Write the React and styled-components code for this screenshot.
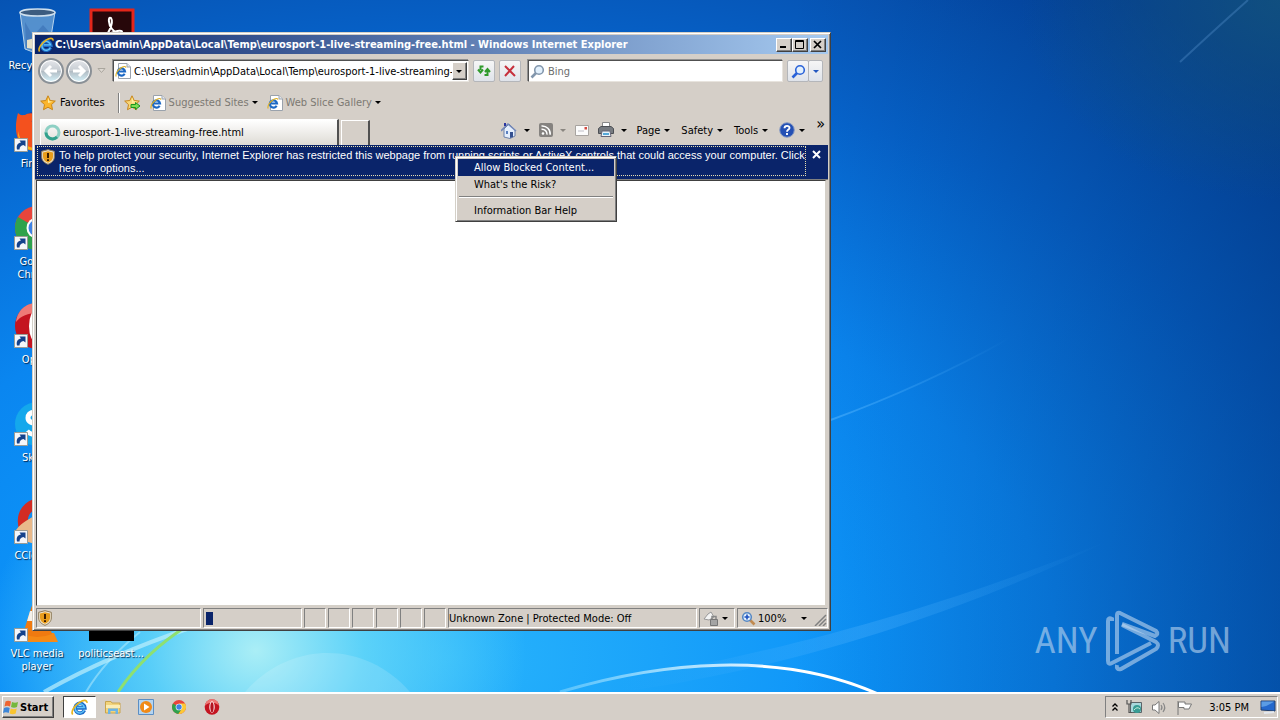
import React from "react";
import styled, { createGlobalStyle, css } from "styled-components";

const GlobalStyle = createGlobalStyle`
  * {
    box-sizing: border-box;
  }
  body {
    margin: 0;
    font-family: "DejaVu Sans Condensed", "DejaVu Sans", sans-serif;
    font-size: 11px;
    line-height: 13px;
    color: #000;
  }
  button, input {
    font: inherit;
    color: inherit;
    margin: 0;
    padding: 0;
    border: 0;
    background: none;
  }
  svg {
    display: block;
    flex: none;
  }
`;

const raised = css`
  border: 1px solid;
  border-color: #fff #404040 #404040 #fff;
  box-shadow: inset -1px -1px 0 #808080;
`;

const sunken = css`
  border: 1px solid;
  border-color: #808080 #fff #fff #808080;
`;

const Screen = styled.div`
  display: flex;
  flex-direction: column;
  min-height: 100vh;
`;

const Desktop = styled.main`
  position: relative;
  flex: 1;
  overflow: hidden;
  background:
    radial-gradient(ellipse 270px 240px at 20% 94%, #aaeef6 0, rgba(110, 222, 248, 0.75) 40%, rgba(40, 184, 252, 0) 100%),
    radial-gradient(ellipse 260px 200px at 100% 0, rgba(20, 84, 124, 0.8) 0, rgba(20, 84, 124, 0) 100%),
    linear-gradient(to right, rgba(0, 40, 110, 0) 62%, rgba(0, 40, 104, 0.4) 100%),
    radial-gradient(ellipse 95% 115% at 35% 95%, #28b4fc 0, #0c92f8 35%, #0a86f0 50%, #0664cc 75%, #0654b4 90%, #0446a4 100%);
`;

const Wallpaper = styled.svg`
  position: absolute;
  inset: 0;
  width: 100%;
  height: 100%;
`;

const IconGrid = styled.div`
  position: relative;
  display: grid;
  grid-template-columns: 74px 74px;
  grid-auto-rows: 88px;
  row-gap: 10px;
  padding-top: 8px;
`;

const Shortcut = styled.button`
  grid-row: ${(props) => props.$row};
  grid-column: ${(props) => props.$col};
  display: flex;
  flex-direction: column;
  align-items: center;
  gap: 3px;
  color: #fff;
  text-shadow: 1px 1px 1px #024;
`;

const ShortcutLabel = styled.span`
  width: 68px;
`;

const Watermark = styled.div`
  position: absolute;
  right: 49px;
  bottom: 20px;
  display: flex;
  align-items: center;
  gap: 7px;
  color: rgba(190, 215, 240, 0.6);
  font-family: "Roboto Condensed", "Liberation Sans Narrow", Roboto, sans-serif;
  font-size: 37px;
  font-weight: 400;
  line-height: 60px;
`;

const Window = styled.section`
  position: absolute;
  left: 32px;
  top: 32px;
  width: min(799px, calc(100% - 40px));
  height: min(599px, calc(100% - 40px));
  display: flex;
  flex-direction: column;
  padding: 2px;
  border: 1px solid;
  border-color: #d4d0c8 #404040 #404040 #d4d0c8;
  box-shadow: inset 1px 1px 0 #fff, inset -1px -1px 0 #808080;
  background: #d5cfc8;
`;

const TitleBar = styled.header`
  display: flex;
  align-items: center;
  gap: 1px;
  height: 19px;
  padding: 0 2px 0 3px;
  background: linear-gradient(to right, #0a246a, #a6caf0);
`;

const Title = styled.h1`
  flex: 1;
  margin: 0;
  font-size: 11px;
  font-weight: 700;
  color: #fff;
  white-space: nowrap;
  overflow: hidden;
`;

const CaptionButton = styled.button`
  ${raised}
  display: grid;
  place-items: center;
  width: 16px;
  height: 14px;
  background: #d5cfc8;
  margin-left: ${(props) => (props.$apart ? "1px" : "-1px")};
`;

const NavRow = styled.div`
  display: flex;
  align-items: center;
  height: 34px;
  padding: 0 5px 0 3px;
`;

const Travel = styled.div`
  display: flex;
  align-items: center;
  gap: 2px;
  margin-right: 5px;
`;

const RoundButton = styled.button`
  display: grid;
  place-items: center;
  width: 26px;
  height: 26px;
  border: 2px solid #8a9096;
  border-radius: 50%;
  box-shadow: inset 0 0 0 1px #fff;
  background: linear-gradient(#e4e6ea 0, #c6ccd2 48%, #b0bac2 50%, #d6f2fa 100%);
`;

const Field = styled.div`
  display: flex;
  align-items: center;
  flex: ${(props) => props.$grow};
  min-width: 0;
  height: 22px;
  padding: 0 1px;
  background: #fff;
  border: 1px solid;
  border-color: #505050 #e8e4de #e8e4de #505050;
  box-shadow: -1px -1px 0 #909090;
`;

const TextInput = styled.input`
  flex: 1;
  min-width: 0;
  padding-left: 3px;
  outline: none;
  &::placeholder {
    color: #6d6d6d;
    opacity: 1;
  }
`;

const DropButton = styled.button`
  ${raised}
  display: grid;
  place-items: center;
  width: 15px;
  height: 18px;
  background: #d5cfc8;
`;

const SoftButton = styled.button`
  display: grid;
  place-items: center;
  width: ${(props) => (props.$narrow ? "15px" : "22px")};
  height: 22px;
  border: 1px solid #b4b6ba;
  border-radius: 2px;
  background: linear-gradient(#f6f6f6, #dfe3ea);
  margin-left: ${(props) => (props.$narrow ? "-1px" : "4px")};
`;

const Caret = styled.span`
  flex: none;
  width: 0;
  height: 0;
  border: 3px solid transparent;
  border-bottom-width: 0;
  border-top-color: ${(props) => props.$color || "#000"};
`;

const FavoritesRow = styled.nav`
  display: flex;
  align-items: center;
  height: 29px;
  padding-left: 5px;
`;

const FavButton = styled.button`
  display: flex;
  align-items: center;
  gap: 3px;
  margin-right: 9px;
  color: ${(props) => (props.$dim ? "#7c7973" : "#000")};
`;

const Divider = styled.span`
  width: 2px;
  height: 20px;
  margin: 0 4px;
  border-left: 1px solid #808080;
  border-right: 1px solid #fff;
`;

const TabRow = styled.div`
  display: flex;
  align-items: stretch;
  height: 28px;
  padding: 2px 3px 0 5px;
`;

const Tab = styled.button`
  display: flex;
  align-items: center;
  gap: 2px;
  flex: 0 1 299px;
  padding-left: 3px;
  border-top: 1px solid #fff;
  border-left: 1px solid #fff;
  border-right: 2px solid #505050;
  background: linear-gradient(#fff, #dedbd5);
`;

const NewTab = styled.button`
  width: 29px;
  margin: 1px 0 0 2px;
  border: 1px solid #fff;
  border-right: 2px solid #505050;
  border-bottom: 0;
`;

const Commands = styled.div`
  display: flex;
  align-items: center;
  justify-content: flex-end;
  flex: 1;
  padding-bottom: 4px;
`;

const Command = styled.button`
  display: flex;
  align-items: center;
  gap: ${(props) => (props.$icon ? "7px" : "4px")};
  margin-right: ${(props) => (props.$icon ? "9px" : "11px")};
`;

const Overflow = styled.button`
  align-self: flex-start;
  font-size: 16px;
  line-height: 9px;
`;

const InfoBar = styled.div`
  display: flex;
  align-items: flex-start;
  justify-content: space-between;
  height: 35px;
  padding: 1px 5px 3px 2px;
  border-bottom: 1px solid #808080;
  background: #0a246a;
  color: #fff;
`;

const InfoMessage = styled.button`
  display: flex;
  align-items: flex-start;
  gap: 4px;
  flex: 0 1 768px;
  height: 30px;
  padding: 2px 0 0 3px;
  border: 1px dotted #e8e0b0;
  font-family: "Liberation Sans", Arial, sans-serif;
  text-align: left;
  white-space: nowrap;
`;

const InfoClose = styled.button`
  display: grid;
  place-items: center;
  width: 14px;
  height: 16px;
`;

const Page = styled.div`
  flex: 1;
  margin: 0 2px 2px 1px;
  background: #fff;
  border: 1px solid;
  border-color: #404040 #d4d0c8 #d4d0c8 #404040;
`;

const StatusBar = styled.footer`
  display: flex;
  gap: 2px;
  height: 20px;
  padding-left: 1px;
`;

const Pane = styled.div`
  ${sunken}
  display: flex;
  align-items: center;
  flex: ${(props) => props.$flex};
  min-width: 0;
  padding-left: ${(props) => props.$pad || "0"};
  white-space: nowrap;
`;

const PaneButton = styled.button`
  display: flex;
  align-items: center;
  flex: 1;
  gap: 2px;
`;

const ZoomText = styled.span`
  flex: 1;
  text-align: left;
`;

const Chunk = styled.span`
  width: 7px;
  height: 13px;
  margin-left: 2px;
  background: #0a246a;
`;

const Menu = styled.ul`
  position: absolute;
  left: 422px;
  top: 123px;
  width: 162px;
  margin: 0;
  padding: 2px;
  list-style: none;
  background: #d5cfc8;
  border: 1px solid;
  border-color: #d4d0c8 #404040 #404040 #d4d0c8;
  box-shadow: inset 1px 1px 0 #fff, inset -1px -1px 0 #808080;
`;

const MenuItem = styled.button`
  display: block;
  width: 100%;
  height: 17px;
  padding-left: 16px;
  text-align: left;
  color: ${(props) => (props.$active ? "#fff" : "#000")};
  background: ${(props) => (props.$active ? "#0a246a" : "transparent")};
`;

const MenuLine = styled.li`
  height: 2px;
  margin: 3px 1px 4px;
  border-top: 1px solid #808080;
  border-bottom: 1px solid #fff;
`;

const Taskbar = styled.footer`
  display: flex;
  align-items: flex-start;
  gap: 1px;
  height: 28px;
  padding: 2px 2px 0;
  border-top: 2px solid #fff;
  background: #d5cfc8;
`;

const StartButton = styled.button`
  ${raised}
  display: flex;
  align-items: center;
  gap: 1px;
  width: 52px;
  height: 22px;
  margin-right: 8px;
  font-weight: 700;
`;

const TaskButton = styled.button`
  display: grid;
  place-items: center;
  width: ${(props) => (props.$active ? "33px" : "32px")};
  height: 22px;
  ${(props) =>
    props.$active &&
    css`
      background: #fff;
      border: 1px solid;
      border-color: #404040 #fff #fff #404040;
    `}
`;

const Tray = styled.div`
  ${sunken}
  display: flex;
  align-items: center;
  gap: 8px;
  height: 22px;
  margin-left: auto;
  padding-left: 6px;
`;

const Clock = styled.time`
  padding: 0 3px 0 8px;
`;

const IeIcon = ({ size = 16 }) => (
  <svg width={size} height={size} viewBox="0 0 16 16">
    <path d="M12.6 10.6A4.6 4.6 0 1 1 13 8.3H5.2" fill="none" stroke="#1c6cc8" strokeWidth="3.400" />
    <path d="M12.4 10.4A4.4 4.4 0 1 1 12.6 7.9H5.6" fill="none" stroke="#62c4f8" strokeWidth="1.400" />
    <path d="M1.6 14.6C-.4 12 3 6.600 8 3.200 11.500 .9 15.200 .5 15 3.600" fill="none" stroke="#e8b41e" strokeWidth="1.600" />
  </svg>
);

const PageIcon = () => (
  <svg width="16" height="16" viewBox="0 0 16 16">
    <path d="M3.500 .5H12L15.500 4V15.500H3.500Z" fill="#fff" stroke="#9aa2ac" />
    <path d="M12 .5V4H15.500" fill="#e4e8ee" stroke="#9aa2ac" />
    <path d="M9.600 10.700A3.600 3.600 0 1 1 10 8.500H4" fill="none" stroke="#1c68c4" strokeWidth="2.200" />
    <path d="M1.200 13.500C0 11 3 6.500 7 4.300 9 3.200 11 3 10.800 4.800" fill="none" stroke="#e0b020" strokeWidth="1.100" />
  </svg>
);

const Star = ({ add }) => (
  <svg width="17" height="16" viewBox="0 0 17 16">
    <path d="M8 .8L10.200 5.500 15.300 6.100 11.500 9.600 12.500 14.700 8 12.200 3.500 14.700 4.500 9.600 .7 6.100 5.800 5.500Z" fill={add ? "#f8d678" : "#fbb52c"} stroke="#c8861a" />
    <path d="M8 2.500L9.400 6.200 13 6.700 8 8Z" fill="#fff0a0" />
    {add && <path d="M7 9.500H11.500V7.500L16 11 11.500 14.500V12.500H7Z" fill="#7ede52" stroke="#1c9420" />}
  </svg>
);

const Arrow = ({ flip }) => (
  <svg width="16" height="14" viewBox="0 0 16 14">
    <path d={flip ? "M2 7H13M8 2L13 7 8 12" : "M14 7H3M8 2L3 7 8 12"} fill="none" stroke="#fff" strokeWidth="3" />
  </svg>
);

const Magnifier = ({ color = "#2a62d8", flip, plus }) => (
  <svg width="15" height="15" viewBox="0 0 15 15">
    <g transform={flip ? undefined : "translate(15 0) scale(-1 1)"}>
      <path d="M9 9L13.500 13.500" stroke={plus ? "#c08a50" : color} strokeWidth="2.600" />
      <circle cx="6" cy="6" r="4.300" fill="#e2f0fc" stroke={color} strokeWidth="1.600" />
      {plus && <path d="M3.500 6H8.500M6 3.500V8.500" stroke="#1c50c0" strokeWidth="1.600" />}
    </g>
  </svg>
);

const Shield = () => (
  <svg width="14" height="16" viewBox="0 0 14 16">
    <path d="M7 .7L13.300 2.300V8C13.300 11.500 10.500 14 7 15.300 3.500 14 .7 11.500 .7 8V2.300Z" fill="#f0e4cc" stroke="#8d7a58" />
    <path d="M7 2.300L12 3.500V8C12 10.500 9.700 12.800 7 13.800 4.300 12.800 2 10.500 2 8V3.500Z" fill="#e79c1c" />
    <path d="M7 4V9M7 10.300V12" stroke="#3a1d00" strokeWidth="2" />
  </svg>
);

const ShortcutBadge = () => (
  <g>
    <path d="M1.500 32.500H14.500V45.500H1.500Z" fill="#f4f6fa" stroke="#9a9c96" />
    <path d="M4 43.500C3 39 5 37 8 36.500L6.500 34.500H12.500V40.500L10.500 39C8 39.500 6.500 41 6.500 43.500Z" fill="#14428c" />
  </g>
);

const ChromeArt = () => (
  <>
    <circle cx="24" cy="24" r="22" fill="#e8453c" />
    <path d="M24 24L5 13A22 22 0 0 0 22 46L34 29Z" fill="#2fa24c" />
    <path d="M24 24L34 29 22 46A22 22 0 0 0 43 13H24Z" fill="#fcc934" />
    <circle cx="24" cy="24" r="10.500" fill="#fff" />
    <circle cx="24" cy="24" r="8.500" fill="#3f82e4" />
  </>
);

const OperaArt = ({ inner = "#48202c" }) => (
  <>
    <ellipse cx="24" cy="24" rx="22" ry="23" fill="#c41420" />
    <path d="M3 20C5 6 15 1 24 1S43 6 45 20C36 8 12 8 3 20Z" fill="#ee7a76" />
    <ellipse cx="24" cy="24" rx="8" ry="17" fill="#fff" />
    <ellipse cx="24" cy="25" rx="5" ry="15" fill={inner} />
  </>
);

const art = {
  bin: (
    <>
      <path d="M7 4L12 41Q24 47 36 41L42 4Z" fill="#6fa3d4" fillOpacity=".75" stroke="#b8d4ec" />
      <path d="M12 14L20 28 30 17 38 26 34 40Q24 44 13 40Z" fill="#3d74b8" fillOpacity=".7" />
      <path d="M14 32L22 30 26 42 14 40Z" fill="#e6e0c8" />
      <ellipse cx="24.500" cy="4.500" rx="17.500" ry="3.500" fill="#3c5c80" stroke="#cfe0ee" strokeWidth="1.500" />
    </>
  ),
  acrobat: (
    <>
      <path d="M4 2H46V46H4Z" fill="#27070a" stroke="#e4261a" strokeWidth="3" />
      <path d="M15 31C21 28 27 15 24 10 21 8 21 16 25 21 28 25 35 27 35 24S22 24 15 31Z" fill="none" stroke="#fff" strokeWidth="2" />
    </>
  ),
  firefox: (
    <>
      <circle cx="25" cy="25" r="20" fill="#2c3f94" />
      <path d="M5 7C8 10 9 9 12 9 15 7 20 6 24 10 17 13 17 18 24 20 20 25 25 32 38 28 37 42 26 46 20 45 4 42 0 25 5 7Z" fill="#f4511e" />
      <path d="M5 25C7 36 14 43 25 42 17 48 4 40 5 25Z" fill="#fdb515" />
    </>
  ),
  chrome: <ChromeArt />,
  opera: <OperaArt />,
  skype: (
    <>
      <circle cx="24" cy="24" r="22" fill="#14a8ec" />
      <path d="M32 15C26 10 15 11 15 18 15 26 32 22 32 29 31 36 18 36 14 31" fill="none" stroke="#fff" strokeWidth="5" />
    </>
  ),
  ccleaner: (
    <>
      <path d="M42 12A18 18 0 1 0 42 34" fill="none" stroke="#d22c24" strokeWidth="10" />
      <path d="M3 32C10 22 18 22 22 16L34 34 22 46 8 42Z" fill="#e9b98a" />
    </>
  ),
  vlc: (
    <>
      <path d="M8 37H41L45 46H4Z" fill="#f58a16" />
      <path d="M21 3H28L39 38Q24 44 10 38Z" fill="#f07a10" />
      <path d="M17 15H32L35 25H14Z" fill="#f4f0ea" />
    </>
  ),
  black: <path d="M2 0H47V45H2Z" fill="#000" />,
};

const shortcuts = [
  { row: 1, col: 1, icon: "bin", label: "Recycle Bin", plain: true },
  { row: 1, col: 2, icon: "acrobat", label: "Acrobat", plain: true },
  { row: 2, col: 1, icon: "firefox", label: "Firefox" },
  { row: 3, col: 1, icon: "chrome", label: "Google Chrome" },
  { row: 4, col: 1, icon: "opera", label: "Opera" },
  { row: 5, col: 1, icon: "skype", label: "Skype" },
  { row: 6, col: 1, icon: "ccleaner", label: "CCleaner" },
  { row: 7, col: 1, icon: "vlc", label: "VLC media player" },
  { row: 7, col: 2, icon: "black", label: "politicseast...", plain: true },
];

const WallpaperArt = () => (
  <Wallpaper viewBox="0 0 1280 692" preserveAspectRatio="none" aria-hidden="true">
    <defs>
      <linearGradient id="arc" x1="0" x2="1">
        <stop offset="0" stopColor="#8fdcff" stopOpacity=".5" />
        <stop offset=".65" stopColor="#fff" />
        <stop offset="1" stopColor="#fff" />
      </linearGradient>
      <linearGradient id="beam" x1="0" x2="1">
        <stop offset="0" stopColor="#5ab8ff" stopOpacity="0" />
        <stop offset=".5" stopColor="#5ab8ff" stopOpacity=".28" />
        <stop offset="1" stopColor="#5ab8ff" stopOpacity="0" />
      </linearGradient>
      <linearGradient id="hair" x1="0" x2="1">
        <stop offset="0" stopColor="#5ab8ff" stopOpacity=".5" />
        <stop offset="1" stopColor="#5ab8ff" stopOpacity="0" />
      </linearGradient>
    </defs>
    <path d="M245 692C290 640 365 640 410 692Z" fill="#fff" fillOpacity=".14" />
    <path d="M44 692Q110 655 190 628" fill="none" stroke="#bdf0fc" strokeOpacity=".7" strokeWidth="4" />
    <path d="M86 692Q105 660 140 632" fill="none" stroke="#bdf0fc" strokeOpacity=".5" strokeWidth="2" />
    <path d="M118 692Q145 652 190 624" fill="none" stroke="#8ee070" strokeWidth="3" />
    <path d="M560 692C660 662 780 650 878 694" fill="none" stroke="url(#arc)" strokeWidth="3" />
    <path d="M620 692C800 668 980 605 1110 540C980 592 820 645 620 680Z" fill="url(#beam)" />
    <path d="M828 421C880 402 940 377 1010 338" fill="none" stroke="url(#hair)" strokeWidth="2" />
    <path d="M1180 62Q1210 34 1248 0" fill="none" stroke="#4f8cc8" strokeOpacity=".4" strokeWidth="2" />
  </Wallpaper>
);

const App = () => {
  return (
    <Screen>
      <GlobalStyle />
      <Desktop>
        <WallpaperArt />
        <IconGrid>
          {shortcuts.map((item) => (
            <Shortcut key={item.label} $row={item.row} $col={item.col}>
              <svg width="48" height="48" viewBox="0 0 48 48">
                {art[item.icon]}
                {!item.plain && <ShortcutBadge />}
              </svg>
              <ShortcutLabel>{item.label}</ShortcutLabel>
            </Shortcut>
          ))}
        </IconGrid>
        <Watermark>
          <span>ANY</span>
          <svg width="56" height="62" viewBox="0 0 56 62" fill="none" stroke="currentColor" strokeWidth="4">
            <path d="M7 11V9Q3 7 3 11V51Q3 55 7 53L46 33" />
            <path d="M12 44V5Q12 2 15 3L51 21Q54 24 50 26L17 14" />
            <path d="M12 55Q11 60 16 59L51 39Q55 35 51 32L17 15" />
          </svg>
          <span>RUN</span>
        </Watermark>

        <Window>
          <TitleBar>
            <IeIcon />
            <Title>C:\Users\admin\AppData\Local\Temp\eurosport-1-live-streaming-free.html - Windows Internet Explorer</Title>
            <CaptionButton aria-label="Minimize">
              <svg width="10" height="9" viewBox="0 0 10 9"><path d="M1 7H7" stroke="#000" strokeWidth="2" /></svg>
            </CaptionButton>
            <CaptionButton aria-label="Maximize">
              <svg width="10" height="9" viewBox="0 0 10 9"><path d="M.5 .5H8.500V8.500H.5ZM.5 1.500H8.500" fill="none" stroke="#000" /></svg>
            </CaptionButton>
            <CaptionButton aria-label="Close" $apart>
              <svg width="10" height="9" viewBox="0 0 10 9"><path d="M1 1L8 8M8 1L1 8" stroke="#000" strokeWidth="1.700" /></svg>
            </CaptionButton>
          </TitleBar>

          <NavRow>
            <Travel>
              <RoundButton aria-label="Back"><Arrow /></RoundButton>
              <RoundButton aria-label="Forward"><Arrow flip /></RoundButton>
              <svg width="14" height="8" viewBox="0 0 14 8"><path d="M4 1.500H11L7.500 5.500Z" fill="#ddd8d2" stroke="#aaa69e" /></svg>
            </Travel>
            <Field $grow="356 1 0">
              <PageIcon />
              <TextInput aria-label="Address" defaultValue="C:\Users\admin\AppData\Local\Temp\eurosport-1-live-streaming-" />
              <DropButton aria-label="Show addresses"><Caret /></DropButton>
            </Field>
            <SoftButton aria-label="Refresh">
              <svg width="16" height="16" viewBox="0 0 16 16">
                <path d="M7.500 3.500H4.500V7M2 6.500L4.500 9.500 7 6.500M8.500 12H11.500V8M9 9L11.500 6 14 9" fill="none" stroke="#2f9a2c" strokeWidth="2" />
              </svg>
            </SoftButton>
            <SoftButton aria-label="Stop">
              <svg width="12" height="12" viewBox="0 0 12 12"><path d="M1 1L11 11M10 1L1 11" stroke="#c6303c" strokeWidth="2" /></svg>
            </SoftButton>
            <svg width="7" height="1" />
            <Field $grow="254 1 0">
              <Magnifier color="#8296ac" />
              <TextInput aria-label="Search" placeholder="Bing" />
            </Field>
            <SoftButton aria-label="Go"><Magnifier /></SoftButton>
            <SoftButton aria-label="Search options" $narrow><Caret $color="#2458c0" /></SoftButton>
          </NavRow>

          <FavoritesRow>
            <FavButton><Star />Favorites</FavButton>
            <Divider />
            <FavButton $dim aria-label="Add to favorites"><Star add /></FavButton>
            <FavButton $dim><PageIcon />Suggested Sites <Caret /></FavButton>
            <FavButton $dim><PageIcon />Web Slice Gallery <Caret /></FavButton>
          </FavoritesRow>

          <TabRow>
            <Tab>
              <svg width="17" height="17" viewBox="0 0 17 17">
                <circle cx="8.500" cy="8.500" r="6.500" fill="none" stroke="#8ed0c4" strokeWidth="3" />
                <path d="M2 8.500A6.500 6.500 0 0 0 13 13" fill="none" stroke="#32a08c" strokeWidth="3" />
              </svg>
              eurosport-1-live-streaming-free.html
            </Tab>
            <NewTab aria-label="New tab" />
            <Commands>
              <Command $icon aria-label="Home">
                <svg width="16" height="17" viewBox="0 0 16 17">
                  <path d="M3 7V15L9 16.500 14 14V8L8 2Z" fill="#e4eefc" stroke="#6c80a8" />
                  <path d="M0 9L7 2 15 9" fill="none" stroke="#7488b8" strokeWidth="1.600" />
                  <path d="M3 1H5V4H3Z" fill="#2c36a0" /><path d="M9 10H12V15L9 16Z" fill="#345090" /><path d="M5 9H7V12H5Z" fill="#5a80c0" />
                </svg>
                <Caret />
              </Command>
              <Command $icon aria-label="Feeds">
                <svg width="14" height="14" viewBox="0 0 14 14">
                  <rect width="14" height="14" rx="2" fill="#85827f" />
                  <circle cx="4" cy="10.500" r="1.300" fill="#fff" />
                  <path d="M2.500 6.200A5 5 0 0 1 8 11.700M2.500 3A8 8 0 0 1 11.200 11.700" fill="none" stroke="#fff" strokeWidth="1.500" />
                </svg>
                <Caret $color="#8a8680" />
              </Command>
              <Command $icon aria-label="Read mail">
                <svg width="14" height="11" viewBox="0 0 14 11">
                  <path d="M.5 .5H13.500V10.500H.5Z" fill="#fcfcfc" stroke="#a8a4a0" />
                  <path d="M3 6H9" stroke="#c0c0c8" /><path d="M9.500 2H12V4.500H9.500Z" fill="#d44a40" />
                </svg>
              </Command>
              <Command $icon aria-label="Print">
                <svg width="16" height="16" viewBox="0 0 16 16">
                  <path d="M4.500 .5H11.500V6H4.500Z" fill="#fff" stroke="#888" />
                  <path d="M.5 6.500L3 4.500H13L15.500 6.500V11.500H.5Z" fill="#777b80" stroke="#4c4f54" />
                  <path d="M4 9H12L13 14.500H3Z" fill="#e8f4fc" stroke="#667" /><path d="M5 12H11" stroke="#55a8d8" strokeWidth="2" />
                </svg>
                <Caret />
              </Command>
              <Command>Page <Caret /></Command>
              <Command>Safety <Caret /></Command>
              <Command>Tools <Caret /></Command>
              <Command aria-label="Help">
                <svg width="16" height="16" viewBox="0 0 16 16">
                  <circle cx="8" cy="8" r="7.300" fill="#2450b4" stroke="#8a9cc4" />
                  <path d="M5.500 6.300C5.500 3 10.700 3.200 10.500 6 10.400 7.600 8 7.700 8 9.800M8 11V13" fill="none" stroke="#fff" strokeWidth="1.900" />
                </svg>
                <Caret />
              </Command>
              <Overflow aria-label="More commands">»</Overflow>
            </Commands>
          </TabRow>

          <InfoBar>
            <InfoMessage>
              <Shield />
              <span>
                To help protect your security, Internet Explorer has restricted this webpage from running scripts or ActiveX controls that could access your computer. Click
                <br />
                here for options...
              </span>
            </InfoMessage>
            <InfoClose aria-label="Close information bar">
              <svg width="9" height="9" viewBox="0 0 9 9"><path d="M1 1L8 8M8 1L1 8" stroke="#fff" strokeWidth="2" /></svg>
            </InfoClose>
          </InfoBar>

          <Page />

          <StatusBar>
            <Pane $flex="164 1 0" $pad="1px"><Shield /></Pane>
            <Pane $flex="98 1 0"><Chunk /></Pane>
            {[0, 1, 2, 3, 4, 5].map((n) => (
              <Pane key={n} $flex="0 0 22px" />
            ))}
            <Pane $flex="250 1 0">Unknown Zone | Protected Mode: Off</Pane>
            <Pane $flex="0 0 36px" $pad="3px">
              <PaneButton aria-label="Protected mode">
                <svg width="17" height="15" viewBox="0 0 17 15">
                  <path d="M1 8L5 3 8 1 11 6 6 9Z" fill="#f4f4f4" stroke="#999" />
                  <path d="M7.500 8.500H14.500V14.500H7.500Z" fill="#a4a4a4" stroke="#777" /><path d="M9 8V5.500H13V8" fill="none" stroke="#888" strokeWidth="1.500" />
                </svg>
                <Caret />
              </PaneButton>
            </Pane>
            <Pane $flex="0 0 91px" $pad="3px">
              <PaneButton>
                <Magnifier color="#5688c4" flip plus />
                <ZoomText>100%</ZoomText>
                <Caret />
                <svg width="18" height="16" viewBox="0 0 18 16">
                  <path d="M6 16L17 5M10 16L17 9M14 16L17 13" stroke="#808080" strokeWidth="1.500" />
                </svg>
              </PaneButton>
            </Pane>
          </StatusBar>

          <Menu role="menu">
            <li><MenuItem role="menuitem" $active>Allow Blocked Content...</MenuItem></li>
            <li><MenuItem role="menuitem">What's the Risk?</MenuItem></li>
            <MenuLine role="separator" />
            <li><MenuItem role="menuitem">Information Bar Help</MenuItem></li>
          </Menu>
        </Window>
      </Desktop>

      <Taskbar>
        <StartButton>
          <svg width="16" height="16" viewBox="0 0 16 16">
            <path d="M2.500 2.500Q5 1 8 2.500L7 7.500Q4 6 1.500 7.500Z" fill="#ee6430" />
            <path d="M9 3Q12 4.500 15 3L14 8Q11 9.500 8 8Z" fill="#74b83c" />
            <path d="M1 9Q4 7.500 6.700 9L5.700 14Q3 12.500 0 14Z" fill="#3d86d8" />
            <path d="M7.700 9.500Q11 11 13.700 9.500L12.700 14.500Q9.500 16 6.700 14.500Z" fill="#f8c430" />
          </svg>
          Start
        </StartButton>
        <TaskButton $active aria-label="Internet Explorer"><IeIcon size={17} /></TaskButton>
        <TaskButton aria-label="File Explorer">
          <svg width="16" height="16" viewBox="0 0 16 16">
            <path d="M.5 2.500H6L7 4H15V14H.5Z" fill="#f2d47c" stroke="#c9a44c" />
            <path d="M1 6H15V9H1Z" fill="#fbedb4" /><path d="M3 15V9.500H13V15H10.500V12H5.500V15Z" fill="#6cb4e4" />
          </svg>
        </TaskButton>
        <TaskButton aria-label="Media Player">
          <svg width="16" height="16" viewBox="0 0 16 16">
            <path d="M.5 .5H15.500V15.500H.5Z" fill="#b4d4f0" stroke="#5b8ec4" />
            <circle cx="8" cy="8" r="6" fill="#f08a18" /><path d="M6 4.500L11.500 8 6 11.500Z" fill="#fff" />
          </svg>
        </TaskButton>
        <TaskButton aria-label="Chrome">
          <svg width="14" height="14" viewBox="2 2 44 44"><ChromeArt /></svg>
        </TaskButton>
        <TaskButton aria-label="Opera">
          <svg width="16" height="16" viewBox="0 0 48 48"><OperaArt inner="#b41420" /></svg>
        </TaskButton>
        <Tray>
          <svg width="6" height="9" viewBox="0 0 6 9"><path d="M.5 3.500L3 1 5.500 3.500M.5 7.500L3 5 5.500 7.500" fill="none" stroke="#000" strokeWidth="1.300" /></svg>
          <svg width="17" height="16" viewBox="0 0 17 16">
            <path d="M4.500 3.500H15.500V13.500H4.500Z" fill="#a8d8dc" stroke="#5a6468" />
            <circle cx="11" cy="10" r="4" fill="#389c94" /><path d="M8 11Q11 7 14 10" fill="none" stroke="#c8f0dc" />
            <path d="M1 1V5H5V1M3 5V13.500H6" fill="none" stroke="#555" strokeWidth="1.200" />
          </svg>
          <svg width="17" height="15" viewBox="0 0 17 15">
            <path d="M1.500 5H4L8 1.500V13.500L4 10H1.500Z" fill="#fff" stroke="#777" />
            <path d="M10 5Q12 7.500 10 10M12 3Q15.500 7.500 12 12" fill="none" stroke="#888" strokeWidth="1.200" />
          </svg>
          <svg width="17" height="15" viewBox="0 0 17 15">
            <path d="M2 1V15" stroke="#777" strokeWidth="1" />
            <path d="M2.500 2H9V4H15.500L13 9H8V7.500H2.500Z" fill="#fff" stroke="#777" />
          </svg>
          <Clock>3:05 PM</Clock>
          <svg width="17" height="16" viewBox="0 0 17 16">
            <path d="M1 2H15V12L1 11Z" fill="#2468cc" stroke="#24406c" />
            <path d="M1.500 8Q8 7 14 2.500H1.500Z" fill="#5b9ce4" /><path d="M4 14L14 13" stroke="#e4e8ee" strokeWidth="2" />
          </svg>
        </Tray>
      </Taskbar>
    </Screen>
  );
};

export default App;
